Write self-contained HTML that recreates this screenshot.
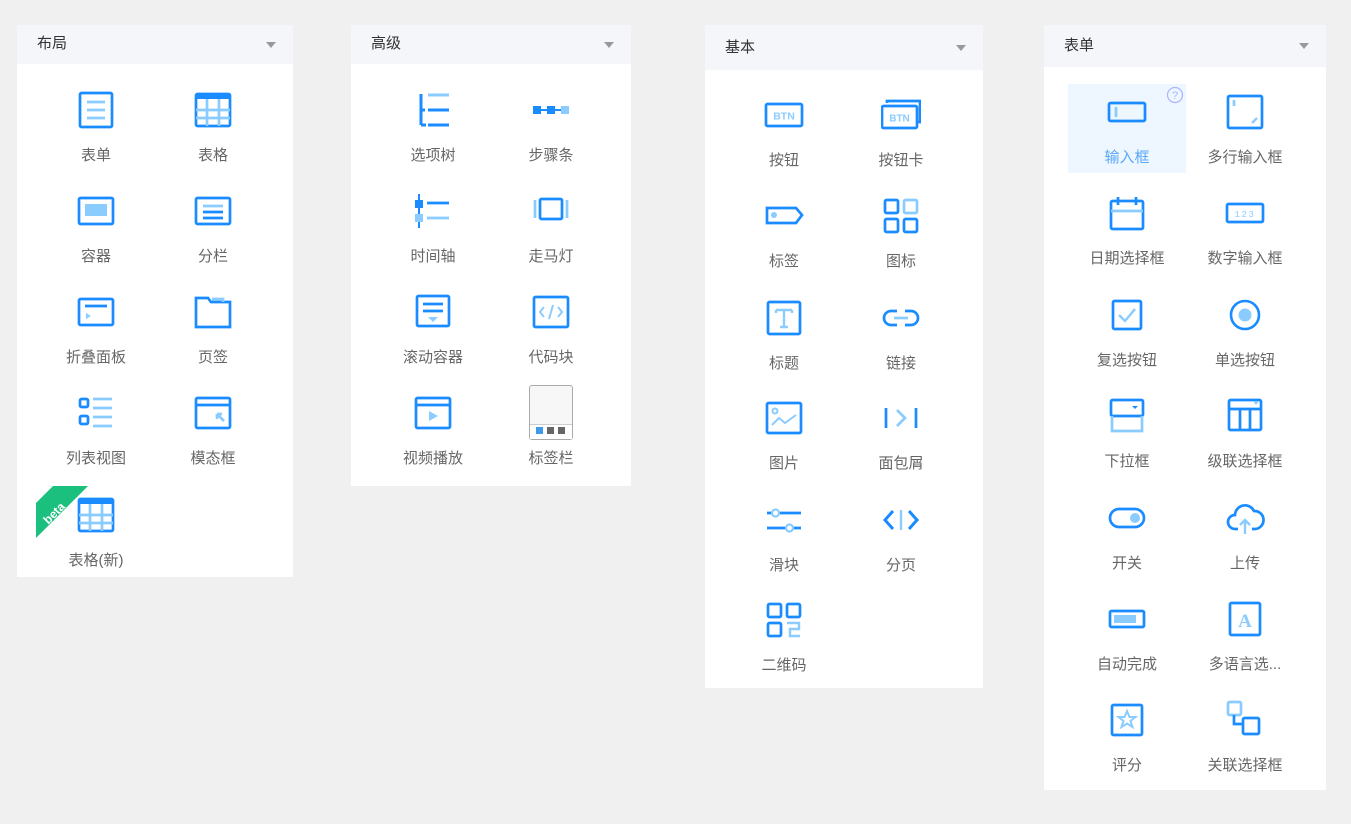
<!DOCTYPE html>
<html><head><meta charset="utf-8"><style>
*{margin:0;padding:0;box-sizing:border-box}
body{width:1351px;height:824px;background:#f0f0f0;position:relative;overflow:hidden;font-family:"Liberation Sans","Noto Sans CJK SC",sans-serif}
.p{position:absolute;background:#fff}
.h{position:absolute;left:0;right:0;top:0;background:#f5f6fa;color:#333;font-size:15px;padding-left:20px}
.h:after{content:"";position:absolute;right:17px;top:50%;margin-top:-3px;border-left:5px solid transparent;border-right:5px solid transparent;border-top:6px solid #999}
svg.i{position:absolute;width:40px;height:40px;fill:none;stroke-width:2.7}
.l{position:absolute;width:120px;text-align:center;font-size:15px;color:#666;line-height:20px}
</style></head><body>
<div class="p" style="left:17px;top:25px;width:276px;height:552px"><div class="h" style="height:39px;line-height:37px">布局</div></div>
<div class="p" style="left:351px;top:25px;width:280px;height:461px"><div class="h" style="height:39px;line-height:37px">高级</div></div>
<div class="p" style="left:705px;top:25px;width:278px;height:663px"><div class="h" style="height:45px;line-height:45px">基本</div></div>
<div class="p" style="left:1044px;top:25px;width:282px;height:765px"><div class="h" style="height:42px;line-height:42px">表单</div></div>
<div style="position:absolute;left:1068px;top:84px;width:118px;height:89px;background:#eef6ff"></div>
<svg style="position:absolute;left:1166px;top:86px;width:18px;height:18px" viewBox="0 0 18 18"><circle cx="9" cy="9" r="7.5" fill="none" stroke="#a9b6ff" stroke-width="1.2"/><text x="9" y="13" text-anchor="middle" font-size="11" fill="#a9b6ff" font-family="Liberation Sans">?</text></svg>

<div id="c"></div>
<script>
var D='#1a8cff',L='#8accff';
function R(x,y,w,h,c,f){return '<rect x="'+x+'" y="'+y+'" width="'+w+'" height="'+h+'" rx="1.5" stroke="'+(c||D)+'"'+(f?' fill="'+f+'"':'')+'/>';}
function F(x,y,w,h,c){return '<rect x="'+x+'" y="'+y+'" width="'+w+'" height="'+h+'" fill="'+c+'" stroke="none"/>';}
function P(d,c,w){return '<path d="'+d+'" stroke="'+(c||D)+'"'+(w?' stroke-width="'+w+'"':'')+'/>';}
var I={
form:R(4,3,32,34)+P('M11 12H29M11 20H29M11 28H29',L),
table:R(3,4,34,32)+F(3,4,34,5,D)+P('M3 20H37M3 28H37M14 9V36M26 9V36',L),
cont:R(3,7,34,26)+F(9,13,22,12,L),
cols:R(3,7,34,26)+P('M10 15H30',L)+P('M10 21H30M10 27H30'),
coll:R(3,7,34,26)+P('M9 14H31')+'<path d="M10 21L15 24L10 27Z" fill="'+L+'"/>',
tabs:P('M3 6H15L18 10H37V35H3Z')+P('M19 7H30V10',L),
list:R(4,6,8,8)+R(4,23,8,8)+P('M17 6H36M17 15H36M17 24H36M17 33H36',L),
modal:R(3,5,34,30)+P('M3 12H37')+P('M31 28L24 21M24 21V26M24 21H29',L),
tree:P('M8 4V35M8 20H12M8 35H13',D,3)+P('M15 5H36',L,3)+P('M15 20H36M15 35H36',D,3),
steps:F(2,16,8,8,D)+F(16,16,8,8,D)+F(30,16,8,8,L)+P('M10 20H16M24 20H30',D,2),
time:P('M6 3V37',D,2)+F(2,9,8,8,D)+F(2,23,8,8,L)+P('M14 12H36',D)+P('M14 27H36',L),
car:R(9,8,22,20)+P('M4 9V27M36 9V27',L),
scroll:R(4,4,32,30)+P('M10 12H30M10 19H30')+'<path d="M15 25H25L20 30Z" fill="'+L+'"/>',
code:R(3,5,34,30)+P('M13 15L9 20L13 25M27 15L31 20L27 25M22 13L18 27',L,2),
video:R(3,5,34,30)+P('M3 12H37')+'<path d="M16 18L25 23L16 28Z" fill="'+L+'"/>',
btn:R(2,9,36,22)+'<text x="20" y="24.5" text-anchor="middle" font-size="10.5" font-weight="bold" fill="'+L+'" stroke="none" font-family="Liberation Sans">BTN</text>',
btnc:P('M6 8V6H39V27H37')+R(1,11,35,22)+'<text x="18.5" y="26.5" text-anchor="middle" font-size="10" font-weight="bold" fill="'+L+'" stroke="none" font-family="Liberation Sans">BTN</text>',
tag:P('M3 12H32L38 19L32 27H3Z')+'<circle cx="10" cy="19" r="3" fill="'+L+'" stroke="none"/>',
grid:R(4,4,13,13)+R(23,4,13,13,L)+R(4,23,13,13)+R(23,23,13,13),
title:R(4,4,32,32)+P('M12 12H28M20 12V29M16 29H24M12 12V15M28 12V15',L,2.4),
link:P('M16 13H10A7 7 0 0 0 10 27H16M24 13H30A7 7 0 0 1 30 27H24')+P('M13 20H27',L),
pic:R(3,5,34,30)+'<circle cx="11" cy="13" r="2.5" stroke="'+L+'" stroke-width="2"/>'+P('M8 27L15 20L21 25L32 17',L,2),
bread:P('M5 10V30M35 10V30')+P('M16 12L24 20L16 28',L),
slider:P('M3 13H8M15 13H37M3 28H22M29 28H37')+'<circle cx="11.5" cy="13" r="3.5" stroke="'+L+'" stroke-width="2.2"/><circle cx="25.5" cy="28" r="3.5" stroke="'+L+'" stroke-width="2.2"/>',
page:P('M12 11L4 20L12 29M28 11L36 20L28 29',D,3)+P('M20 10V30',L,2.4),
qr:R(4,4,13,13)+R(23,4,13,13)+R(4,23,13,13)+P('M23 23H35V29H26V36H36',L,2.4),
input:R(2,11,36,18)+P('M9 15V25',L),
area:R(3,4,34,32)+P('M9 8V14',L)+P('M27 31L32 26',L,2.4),
date:R(4,8,32,28)+P('M11 4V12M29 4V12')+P('M4 18H36',L),
num:R(2,11,36,18)+'<text x="20" y="24" text-anchor="middle" font-size="9" letter-spacing="1.5" fill="'+L+'" stroke="none" font-family="Liberation Mono">123</text>',
check:R(6,6,28,28)+P('M12 20L18 26L28 14',L,2.4),
radio:'<circle cx="20" cy="20" r="14" stroke="'+D+'" stroke-width="2.6"/><circle cx="20" cy="20" r="6.5" fill="'+L+'" stroke="none"/>',
sel:R(4,4,32,16)+P('M5 20V35H35V20',L)+'<path d="M25 10H31L28 13Z" fill="'+D+'"/>',
casc:R(4,4,32,30)+P('M4 13H36M15 13V34M25 13V34')+'<path d="M28 5H34L31 9Z" fill="'+L+'"/>',
sw:'<rect x="3" y="11" width="34" height="18" rx="9" stroke="'+D+'"/><circle cx="28" cy="20" r="5" fill="'+L+'"/>',
up:P('M13 31H10A7 7 0 0 1 10 17A10 10 0 0 1 29 13A8 8 0 0 1 30 31H27')+P('M20 36V22M15 27L20 22L25 27',L,2.4),
auto:R(3,12,34,16)+F(7,16,22,8,L),
i18n:R(5,4,30,32)+'<text x="20" y="28" text-anchor="middle" font-size="19" font-weight="bold" fill="'+L+'" stroke="none" font-family="Liberation Serif">A</text>',
rate:R(5,5,30,30)+P('M20 11L22.5 17H28.5L23.5 21L25.5 27L20 23.5L14.5 27L16.5 21L11.5 17H17.5Z',L,2),
rel:R(3,2,13,13,L)+R(18,18,16,16)+P('M9 15V24H18')
};
var cells=[
[96,110,'form','表单'],[213,110,'table','表格'],[96,211,'cont','容器'],[213,211,'cols','分栏'],
[96,312,'coll','折叠面板'],[213,312,'tabs','页签'],[96,413,'list','列表视图'],[213,413,'modal','模态框'],[96,515,'table','表格(新)'],
[433,110,'tree','选项树'],[551,110,'steps','步骤条'],[433,211,'time','时间轴'],[551,211,'car','走马灯'],
[433,312,'scroll','滚动容器'],[551,312,'code','代码块'],[433,413,'video','视频播放'],[551,413,null,'标签栏'],
[784,115,'btn','按钮'],[901,115,'btnc','按钮卡'],[784,216,'tag','标签'],[901,216,'grid','图标'],
[784,318,'title','标题'],[901,318,'link','链接'],[784,418,'pic','图片'],[901,418,'bread','面包屑'],
[784,520,'slider','滑块'],[901,520,'page','分页'],[784,620,'qr','二维码'],
[1127,112,'input','输入框'],[1245,112,'area','多行输入框'],[1127,213,'date','日期选择框'],[1245,213,'num','数字输入框'],
[1127,315,'check','复选按钮'],[1245,315,'radio','单选按钮'],[1127,416,'sel','下拉框'],[1245,416,'casc','级联选择框'],
[1127,518,'sw','开关'],[1245,518,'up','上传'],[1127,619,'auto','自动完成'],[1245,619,'i18n','多语言选...'],
[1127,720,'rate','评分'],[1245,720,'rel','关联选择框']
];
var h='';
cells.forEach(function(c){
 if(c[2]) h+='<svg class="i" viewBox="0 0 40 40" style="left:'+(c[0]-20)+'px;top:'+(c[1]-20)+'px">'+I[c[2]]+'</svg>';
 h+='<div class="l" style="left:'+(c[0]-60)+'px;top:'+(c[1]+36)+'px;'+(c[3]=='输入框'?'color:#5aa8f8':'')+'">'+c[3]+'</div>';
});
h+='<div style="position:absolute;left:529px;top:385px;width:44px;height:55px;border:1.5px solid #aaa;border-radius:3px;background:#f7f7f7"><div style="position:absolute;left:0;right:0;bottom:0;height:15px;border-top:1px solid #ccc;background:#fff"></div><div style="position:absolute;left:6px;bottom:5px;width:7px;height:7px;background:#3d9be9"></div><div style="position:absolute;left:17px;bottom:5px;width:7px;height:7px;background:#666"></div><div style="position:absolute;left:28px;bottom:5px;width:7px;height:7px;background:#666"></div></div>';
h+='<svg style="position:absolute;left:36px;top:486px;width:52px;height:52px" viewBox="0 0 52 52"><path d="M17 0H52L0 52V17Z" fill="#1bbf7e"/><text x="0" y="0" transform="translate(21 30) rotate(-45)" text-anchor="middle" font-size="12" font-weight="bold" fill="#fff" font-family="Liberation Sans">beta</text></svg>';
document.getElementById('c').innerHTML=h;
</script>
</body></html>
